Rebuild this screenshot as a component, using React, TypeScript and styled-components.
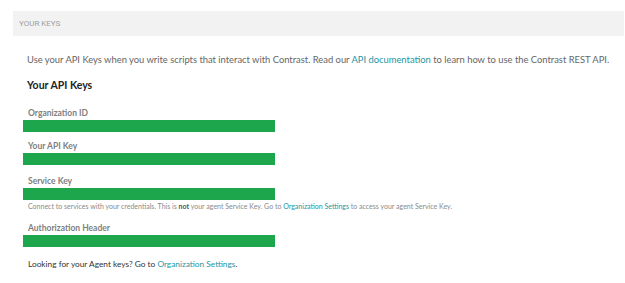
import React from 'react';
import styled, {createGlobalStyle} from 'styled-components';

const GlobalStyle = createGlobalStyle`
  body {
    margin: 0;
    background: #ffffff;
    font-family: Lato, "Open Sans", sans-serif;
  }
`;

const Page = styled.div`
  padding: 11px 1px 0 13px;
`;

const SectionHeader = styled.div`
  height: 25px;
  background: #f2f2f2;
  padding-left: 6px;
  display: flex;
  align-items: center;
  color: #a0a0a0;
  font-family: Roboto, sans-serif;
  font-size: 8px;
  text-transform: uppercase;
`;

const SectionBody = styled.div`
  padding-left: 10px;
  display: flex;
  flex-direction: column;
`;

const Intro = styled.p`
  margin: 17px 0 0 4px;
  font-size: 9.4px;
  line-height: 14px;
  color: #666666;
  white-space: nowrap;
`;

const Title = styled.h3`
  margin: 11px 0 0 4px;
  font-size: 10.5px;
  line-height: 14px;
  font-weight: 700;
  color: #222222;
`;

const Field = styled.div<{ $gap: number }>`
  margin-top: ${props => props.$gap}px;
  display: flex;
  flex-direction: column;
`;

const Label = styled.div`
  padding: 1px 0 0 5px;
  font-size: 8.5px;
  line-height: 13px;
  font-weight: 700;
  color: #808080;
`;

const KeyBar = styled.div`
  width: 252px;
  height: 12px;
  background: #1da64c;
`;

const Help = styled.div`
  padding-left: 5px;
  font-size: 7px;
  line-height: 12px;
  color: #8a8a8a;
  white-space: nowrap;

  b {
    color: #555555;
  }
`;

const Footer = styled.p`
  margin: 10px 0 0 5px;
  font-size: 8.3px;
  line-height: 14px;
  color: #333333;
`;

const Link = styled.a`
  color: #2196a6;
  text-decoration: none;
  cursor: pointer;
`;

function App() {
  return (
    <Page>
      <GlobalStyle />
      <SectionHeader>Your Keys</SectionHeader>
      <SectionBody>
        <Intro>
          Use your API Keys when you write scripts that interact with Contrast. Read our{' '}
          <Link>API documentation</Link> to learn how to use the Contrast REST API.
        </Intro>
        <Title>Your API Keys</Title>
        <Field $gap={14}>
          <Label>Organization ID</Label>
          <KeyBar />
        </Field>
        <Field $gap={7}>
          <Label>Your API Key</Label>
          <KeyBar />
        </Field>
        <Field $gap={9}>
          <Label>Service Key</Label>
          <KeyBar />
          <Help>
            Connect to services with your credentials. This is <b>not</b> your agent Service Key. Go to{' '}
            <Link>Organization Settings</Link> to access your agent Service Key.
          </Help>
        </Field>
        <Field $gap={9}>
          <Label>Authorization Header</Label>
          <KeyBar />
        </Field>
        <Footer>
          Looking for your Agent keys? Go to <Link>Organization Settings</Link>.
        </Footer>
      </SectionBody>
    </Page>
  );
}

export default App;
